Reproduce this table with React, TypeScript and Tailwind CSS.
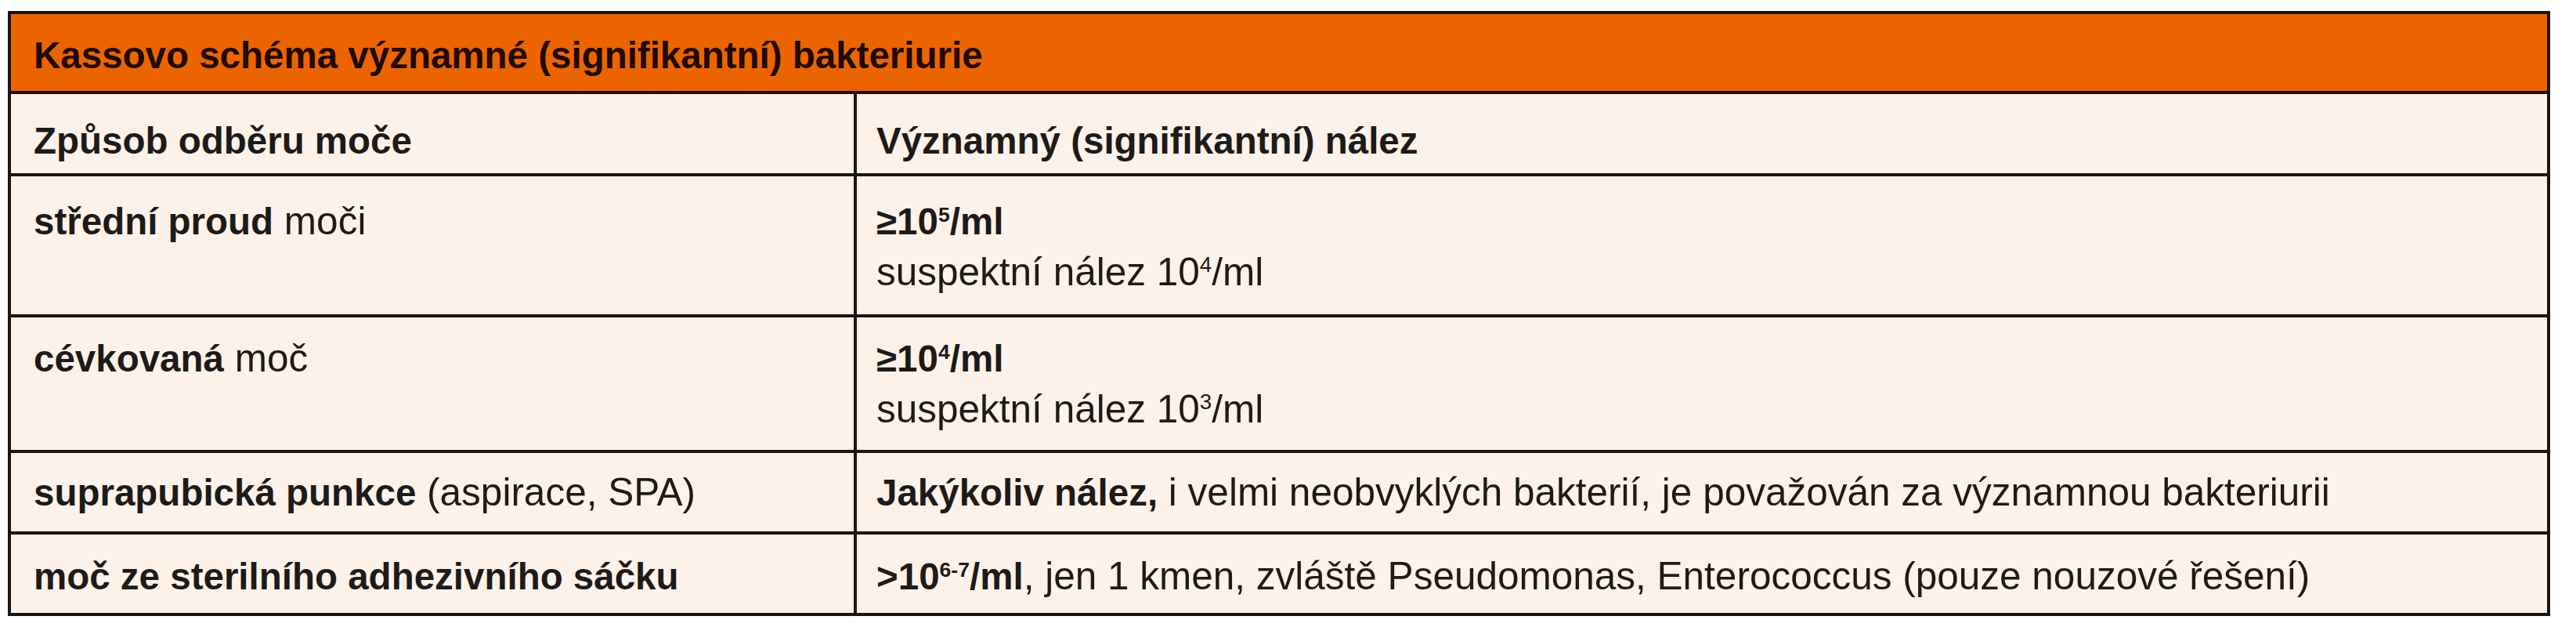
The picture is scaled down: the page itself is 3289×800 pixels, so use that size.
import type { ReactNode } from 'react';

type Row = {
  method: ReactNode;
  finding: ReactNode;
  pad: string;
};

const B = ({ children }: { children: ReactNode }) => (
  <b className="text-[47.5px] font-bold">{children}</b>
);

// small superscript, top aligned with the digits' cap height like the print
const Sup = ({ children }: { children: ReactNode }) => (
  <sup className="top-[-0.62em] text-[56%]">{children}</sup>
);

const rows: Row[] = [
  {
    method: (
      <>
        <B>střední proud</B> moči
      </>
    ),
    finding: (
      <>
        <div>
          <B>
            ≥10<Sup>5</Sup>/ml
          </B>
        </div>
        <div>
          suspektní nález 10<Sup>4</Sup>/ml
        </div>
      </>
    ),
    pad: 'pt-[25px] pb-[22px]',
  },
  {
    method: (
      <>
        <B>cévkovaná</B> moč
      </>
    ),
    finding: (
      <>
        <div>
          <B>
            ≥10<Sup>4</Sup>/ml
          </B>
        </div>
        <div>
          suspektní nález 10<Sup>3</Sup>/ml
        </div>
      </>
    ),
    pad: 'pt-[20px] pb-[20px]',
  },
  {
    method: (
      <>
        <B>suprapubická punkce</B> (aspirace, SPA)
      </>
    ),
    finding: (
      <>
        <B>Jakýkoliv nález,</B> i velmi neobvyklých bakterií, je považován za významnou bakteriurii
      </>
    ),
    pad: 'pt-[18px] pb-[17px]',
  },
  {
    method: <B>moč ze sterilního adhezivního sáčku</B>,
    finding: (
      <>
        <B>
          &gt;10<Sup>6-7</Sup>/ml
        </B>
        , jen 1 kmen, zvláště Pseudomonas, Enterococcus (pouze nouzové řešení)
      </>
    ),
    pad: 'pt-[21px] pb-[14px]',
  },
];

export default function App() {
  return (
    <div className="min-h-screen bg-white pl-[10px] pt-[14px] font-['Liberation_Sans',Arial,sans-serif] text-[#1d1b19]">
      <div className="w-[3246px] border-4 border-[#1b1512] bg-[#fdf2e9]">
        <div className="bg-[#ec6400] px-[29px] pt-[21px] pb-[13px] text-[47.5px] font-bold leading-[64px] text-[#1e0a00]">
          Kassovo schéma významné (signifikantní) bakteriurie
        </div>

        <div className="grid grid-cols-[1076px_1fr] border-t-4 border-[#230c02] text-[49.5px] leading-[64px]">
          <div className="px-[29px] pt-[27px] pb-[9px]">
            <B>Způsob odběru moče</B>
          </div>
          <div className="border-l-4 border-[#1b1512] px-[25px] pt-[27px] pb-[9px]">
            <B>Významný (signifikantní) nález</B>
          </div>
        </div>

        {rows.map((r, i) => (
          <div
            key={i}
            className="grid grid-cols-[1076px_1fr] border-t-4 border-[#1b1512] text-[49.5px] leading-[64px]"
          >
            <div className={`px-[29px] ${r.pad}`}>{r.method}</div>
            <div className={`border-l-4 border-[#1b1512] px-[25px] ${r.pad}`}>{r.finding}</div>
          </div>
        ))}
      </div>
    </div>
  );
}
